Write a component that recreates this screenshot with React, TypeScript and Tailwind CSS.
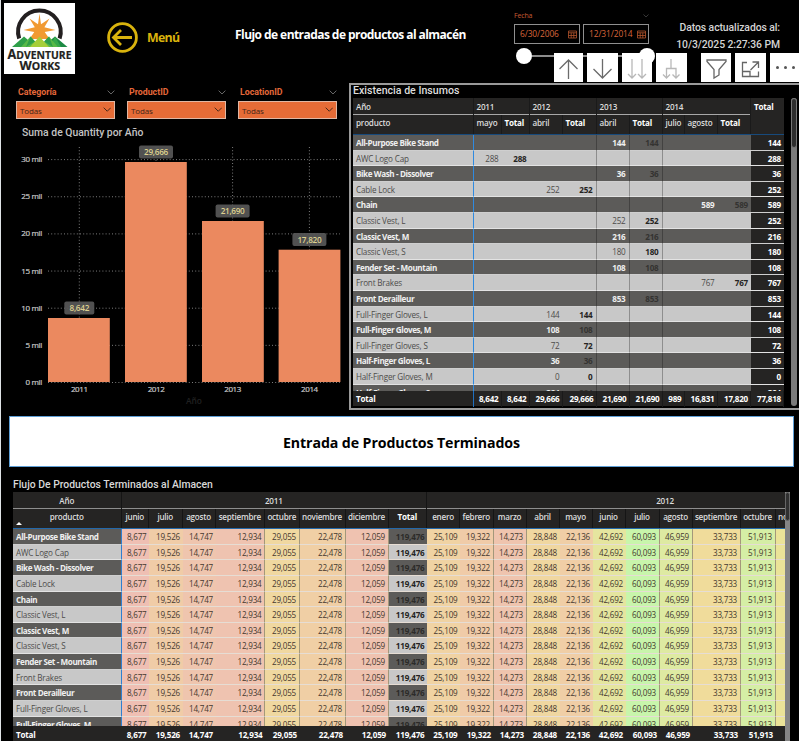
import React from "react";

const MENU = "font-['Open_Sans','Noto_Sans',sans-serif]";
const DIN = "font-[Roboto,'Open_Sans',sans-serif]";

function Logo() {
  return (
    <svg width="71" height="71" viewBox="0 0 71 71" className="mt-[3px] ml-[3px] shrink-0 bg-white">
      <path d="M15.2 35.5 A21.3 21.3 0 1 1 55.6 35.5" fill="none" stroke="#231f20" strokeWidth="4" />
      <path
        d="M35.5 10.5 L37 21.3 L45.5 15.5 L40.4 24.2 L51.5 27 L40.7 29 L45.5 36 H25.5 L30.3 29 L19.5 27 L30.8 24.2 L25.5 15.5 L34 21.3 Z"
        fill="#f19a32"
      />
      <path d="M8 44 L20 33.5 L32 44 Z" fill="#2e9f49" />
      <path d="M38 44 L51 33.5 L63.5 44 Z" fill="#1d8a45" />
      <path d="M46 44 L51 33.5 L57 44 Z" fill="#35a94b" />
      <path d="M17 44 L26.5 33.5 L36 44 Z" fill="#58b947" />
      <path d="M36 44 L45 33.5 L54 44 Z" fill="#58b947" />
      <path d="M26 44 L35.5 33.5 L45 44 Z" fill="#a6ce39" />
      <path d="M26.5 33.5 L31 38.5 L22 44 Z M45 33.5 L40 38.5 L49 44 Z" fill="#2f9e49" />
      <g fontFamily="'Open Sans'" fontWeight="700" fill="#231f20" stroke="#231f20" strokeWidth="0.2">
        <text x="3.5" y="56.4" fontSize="13.4" textLength="64" lengthAdjust="spacingAndGlyphs">
          A<tspan fontSize="11">DVENTURE</tspan>
        </text>
        <text x="15.5" y="67" fontSize="13" textLength="40.5" lengthAdjust="spacingAndGlyphs">
          W<tspan fontSize="10.8">ORKS</tspan>
        </text>
      </g>
    </svg>
  );
}

function Chevron({ color, w = 9 }: { color: string; w?: number }) {
  return (
    <svg width={w} height={w * 0.6} viewBox="0 0 10 6" fill="none" stroke={color} strokeWidth="1.1">
      <path d="M0.8 0.8 L5 5 L9.2 0.8" />
    </svg>
  );
}

function Calendar() {
  return (
    <svg width="9" height="9" viewBox="0 0 9 9" fill="none" stroke="#b4542c" strokeWidth="0.8">
      <path d="M0.5 1 H8.5 V8 H0.5 Z M0.5 2.8 H8.5 M0.5 5.5 H8.5 M3.2 2.8 V8 M5.8 2.8 V8" />
    </svg>
  );
}

function DateBox({ value }: { value: string }) {
  return (
    <div className="flex h-[20px] w-[66px] items-center justify-between border border-[#8f8f8f] pr-[2px] pl-[5px] text-[8.4px] tracking-[-0.1px] text-[#d9663a]">
      <span className="whitespace-nowrap">{value}</span>
      <Calendar />
    </div>
  );
}

const tools = [
  { w: 29, ml: "", color: "#6b6b6b", d: "M14.5 26 V7 M5.5 16 L14.5 7 L23.5 16" },
  { w: 31, ml: "ml-[4px]", color: "#6b6b6b", d: "M15.5 6 V25 M6.5 16 L15.5 25 L24.5 16" },
  { w: 30, ml: "ml-[4px]", color: "#b8b8b8", d: "M10 6 V25 M6 21 L10 25 L14 21 M20 6 V25 M16 21 L20 25 L24 21" },
  { w: 31, ml: "ml-[4px]", color: "#b8b8b8", d: "M15 6 V15.5 M10.5 25 V15.5 H20 V25 M7 21.5 L10.5 25 L14 21.5 M16.5 21.5 L20 25 L23.5 21.5" },
  { w: 30, ml: "ml-[14px]", color: "#666666", d: "M6 7 H25 V8.5 L18 16.5 V22 L13 25 V16.5 L6 8.5 Z" },
  { w: 31, ml: "ml-[4px]", color: "#666666", d: "M12 9.5 H7.5 V23.5 H23.5 V18.5 M7.5 18.5 H15 V23.5 M15.5 17 L23.5 9 M17.5 9 H23.5 V15" },
];

function Toolbar() {
  return (
    <div className="absolute top-[53px] left-[553px] flex">
      {tools.map((t, i) => (
        <div key={i} className={`h-[29px] bg-white ${t.ml}`}>
          <svg width={t.w} height="29" viewBox={`0 0 ${t.w} 29`} fill="none" stroke={t.color} strokeWidth="1.3">
            <path d={t.d} />
          </svg>
        </div>
      ))}
      <div className="ml-[4px] flex h-[29px] w-[29px] items-center justify-between bg-white pr-[4px] pl-[6px]">
        <i className="size-[3.4px] rounded-full bg-[#555]" />
        <i className="size-[3.4px] rounded-full bg-[#555]" />
        <i className="size-[3.4px] rounded-full bg-[#555]" />
      </div>
    </div>
  );
}

function Header() {
  return (
    <header className="relative flex h-[83px] shrink-0">
      <Logo />
      <div className="ml-[32px] flex h-[75px] items-center">
        <svg width="31" height="31" viewBox="0 0 31 31" fill="none" stroke="#d9b30d">
          <circle cx="15.5" cy="15.5" r="13.9" strokeWidth="2.8" />
          <path d="M25 15.5 H7 M14 8 L6.5 15.5 L14 23" strokeWidth="2.8" />
        </svg>
        <span className="mt-[2px] ml-[9px] w-[88px] text-[12.4px] font-bold tracking-[-0.7px] text-[#d9b30d]">Menú</span>
      </div>
      <h1 className="h-[70px] w-[279px] text-[12px] leading-[70px] font-bold tracking-[-0.56px] whitespace-nowrap text-white">
        Flujo de entradas de productos al almacén
      </h1>
      <div className="w-[135px] pt-[11px]">
        <div className="flex h-[10px] items-center justify-between text-[7px] tracking-[-0.15px] text-[#c85a32]">
          <span>Fecha</span>
          <Chevron color="#555" w={6} />
        </div>
        <div className="mt-[3px] flex justify-between">
          <DateBox value="6/30/2006" />
          <DateBox value="12/31/2014" />
        </div>
        <div className="mt-[4px] ml-[2px] flex items-center">
          <i className="size-[16px] rounded-full bg-white" />
          <i className="h-[2px] flex-1 bg-[#8c8c8c]" />
          <i className="-mr-[6px] size-[16px] rounded-full bg-white" />
        </div>
      </div>
      <div className={`${DIN} w-[131px] pt-[19px] text-right text-[10.4px] leading-[17px] font-medium tracking-[-0.08px] whitespace-nowrap text-[#d4d4d4]`}>
        <div>Datos actualizados al:</div>
        <div>10/3/2025 2:27:36 PM</div>
      </div>
      <Toolbar />
    </header>
  );
}

function Slicer({ label }: { label: string }) {
  return (
    <div className="w-[99px]">
      <div className="flex h-[12px] items-center justify-between">
        <span className={`${DIN} mt-[2px] pl-[2px] text-[8.8px] font-bold text-[#e5683a]`}>{label}</span>
        <Chevron color="#777" w={8} />
      </div>
      <div className="mt-[3px] flex h-[18px] items-center justify-between border border-[#e0b7a4] bg-[#e66c37] pr-[3px] pl-[3px]">
        <span className="mt-[2px] text-[8px] tracking-[-0.15px] text-[#3f2419]">Todas</span>
        <Chevron color="#3f2419" w={8.5} />
      </div>
    </div>
  );
}

const bars = [
  { year: "2011", label: "8,642", x: 48, top: 198, cx: 79.3 },
  { year: "2012", label: "29,666", x: 125, top: 42, cx: 156 },
  { year: "2013", label: "21,690", x: 202, top: 101, cx: 232.6 },
  { year: "2014", label: "17,820", x: 278.6, top: 129.7, cx: 309.4 },
];

function BarChart() {
  const ticks = [0, 5, 10, 15, 20, 25, 30];
  return (
    <svg width="348" height="289" viewBox="1 0 348 289" className="block" fontFamily="'Open Sans', sans-serif">
      <g stroke="#7d7d7d" strokeWidth="1" strokeDasharray="1 2.2">
        {ticks.map((t) => (
          <line key={t} x1="48" x2="340" y1={262.5 - t * 7.43} y2={262.5 - t * 7.43} />
        ))}
        {bars.map((b) => (
          <line key={b.year} x1={b.cx} x2={b.cx} y1="27" y2="262" />
        ))}
      </g>
      {ticks.map((t) => (
        <text key={t} x="41.8" y={265 - t * 7.43} fontSize="8" fill="#c8c8c8" textAnchor="end" letterSpacing="-0.35" stroke="#c8c8c8" strokeWidth="0.2">
          {t} mil
        </text>
      ))}
      {bars.map((b) => (
        <g key={b.year}>
          <rect x={b.x} y={b.top} width="61.8" height={262 - b.top} fill="#eb895f" />
          <rect x={b.cx - (b.label.length > 5 ? 17 : 15)} y={b.top - 16.6} width={b.label.length > 5 ? 34 : 30} height="13" rx="2" fill="#575757" fillOpacity="0.93" />
          <text x={b.cx} y={b.top - 7.2} fontSize="8.2" fontWeight="600" fill="#ddd08e" textAnchor="middle" letterSpacing="-0.3">
            {b.label}
          </text>
          <text x={b.cx} y="271.6" fontSize="8" fill="#c8c8c8" textAnchor="middle" letterSpacing="-0.4" stroke="#c8c8c8" strokeWidth="0.2">
            {b.year}
          </text>
        </g>
      ))}
      <text x="194" y="284" fontSize="8.4" fontWeight="600" fill="#202020" textAnchor="middle">
        Año
      </text>
    </svg>
  );
}

const COLS1 = "grid grid-cols-[120.5px_28px_28px_33px_34px_33px_33px_22px_33px_33.5px_33px]";

// [product, mayo, Total, abril, Total, abril, Total, julio, agosto, Total, Total]
const stock: string[][] = [
  ["All-Purpose Bike Stand", "", "", "", "", "144", "144", "", "", "", "144"],
  ["AWC Logo Cap", "288", "288", "", "", "", "", "", "", "", "288"],
  ["Bike Wash - Dissolver", "", "", "", "", "36", "36", "", "", "", "36"],
  ["Cable Lock", "", "", "252", "252", "", "", "", "", "", "252"],
  ["Chain", "", "", "", "", "", "", "", "589", "589", "589"],
  ["Classic Vest, L", "", "", "", "", "252", "252", "", "", "", "252"],
  ["Classic Vest, M", "", "", "", "", "216", "216", "", "", "", "216"],
  ["Classic Vest, S", "", "", "", "", "180", "180", "", "", "", "180"],
  ["Fender Set - Mountain", "", "", "", "", "108", "108", "", "", "", "108"],
  ["Front Brakes", "", "", "", "", "", "", "", "767", "767", "767"],
  ["Front Derailleur", "", "", "", "", "853", "853", "", "", "", "853"],
  ["Full-Finger Gloves, L", "", "", "144", "144", "", "", "", "", "", "144"],
  ["Full-Finger Gloves, M", "", "", "108", "108", "", "", "", "", "", "108"],
  ["Full-Finger Gloves, S", "", "", "72", "72", "", "", "", "", "", "72"],
  ["Half-Finger Gloves, L", "", "", "36", "36", "", "", "", "", "", "36"],
  ["Half-Finger Gloves, M", "", "", "0", "0", "", "", "", "", "", "0"],
  ["Half-Finger Gloves, S", "", "", "324", "324", "", "", "", "", "", "324"],
];
const stockTotals = ["8,642", "8,642", "29,666", "29,666", "21,690", "21,690", "989", "16,831", "17,820", "77,818"];
const ruled1 = [4, 5, 6];
const isTotal1 = [2, 4, 6, 9];

function StockTable() {
  return (
    <section className="relative h-[327px] flex-1 border-2 border-r-0 border-[#9a9a9a] pl-[2px]">
      <h2 className={`${DIN} h-[13px] text-[10.6px] leading-[11px] font-medium text-[#dcdcdc]`}>Existencia de Insumos</h2>
      <div className="flex justify-between">
        <div className="w-[431px] text-[8.1px] tracking-[-0.2px]">
          <div className="flex h-[36px] bg-[#252423] font-semibold text-[#dcdcdc]">
            <div className="w-[398px]">
              <div className="grid h-[17px] grid-cols-[120.5px_56px_67px_66px_88.5px] border-b border-[#a8a8a8] leading-[17px]">
                {["Año", "2011", "2012", "2013", "2014"].map((t) => (
                  <div key={t} className="border-r border-[#1a1a1a] pl-[3px]">{t}</div>
                ))}
              </div>
              <div className="grid h-[19px] grid-cols-[120.5px_28px_28px_33px_34px_33px_33px_22px_33px_33.5px] leading-[15px]">
                {["producto", "mayo", "Total", "abril", "Total", "abril", "Total", "julio", "agosto", "Total"].map((t, i) => (
                  <div key={i} className={`border-r border-[#1a1a1a] pl-[3px] ${t === "Total" ? "font-bold text-white" : ""}`}>{t}</div>
                ))}
              </div>
            </div>
            <div className="pl-[3px] leading-[17px] font-bold text-white">Total</div>
          </div>
          <div className="h-px bg-[#174a7c]" />
          <div className="h-[256px] overflow-hidden">
            {stock.map((r, n) => {
              const dark = n % 2 === 0;
              return (
                <div key={n} className={`${COLS1} h-[15.6px] leading-[16.6px] ${dark ? "bg-[#5c5b59] font-bold text-[#efefef]" : "bg-[#c8c8c8] text-[#4d4c4a]"}`}>
                  {r.map((v, i) => (
                    <div
                      key={i}
                      className={`h-[15.6px] border-b whitespace-nowrap ${dark ? "border-b-[#cfcfcf]" : "border-b-[#e3e3e3]"} ${
                        i === 0
                          ? `border-r border-r-[#2f8ae0] pl-[3px] ${dark ? "tracking-[-0.4px]" : "tracking-[-0.17px]"}`
                          : i === 10
                            ? "bg-[#252423] pr-[3px] text-right font-bold text-white"
                            : `pr-[3px] text-right ${ruled1.includes(i) ? (dark ? "border-r border-r-[#434241]" : "border-r border-r-[#8e8e8e]") : ""} ${
                                isTotal1.includes(i) ? (dark ? "text-[#343331]" : "font-bold text-[#252423]") : ""
                              }`
                      }`}
                    >
                      {v}
                    </div>
                  ))}
                </div>
              );
            })}
          </div>
          <div className={`${COLS1} h-[15px] bg-[#252423] leading-[16px] font-bold text-white`}>
            <div className="border-r border-[#1f6fc0] pl-[3px]">Total</div>
            {stockTotals.map((v, i) => (
              <div key={i} className="flex justify-end border-r border-[#1a1a1a] pr-[2px] tracking-[-0.25px]">{v}</div>
            ))}
          </div>
        </div>
        <div className="mr-[2px] h-[308px] w-[6px] rounded-full bg-[#7a7a7a]">
          <div className="h-[50px] rounded-full border border-[#777] bg-[#2e2e2e]" />
        </div>
      </div>
    </section>
  );
}

const COLS2 =
  "grid w-[806px] grid-cols-[108.5px_27.5px_33.5px_33px_49.5px_34.5px_46px_43px_38.5px_33px_33.5px_33px_33px_33px_33px_34px_33px_48px_35px_46px]";

const months: { name: string; value: string; tint: string; rule?: boolean }[] = [
  { name: "junio", value: "8,677", tint: "bg-[#efbfb3]" },
  { name: "julio", value: "19,526", tint: "bg-[#f0cca7]" },
  { name: "agosto", value: "14,747", tint: "bg-[#efc5ae]" },
  { name: "septiembre", value: "12,934", tint: "bg-[#efc3b0]", rule: true },
  { name: "octubre", value: "29,055", tint: "bg-[#f0d8a0]", rule: true },
  { name: "noviembre", value: "22,478", tint: "bg-[#f0cfa5]", rule: true },
  { name: "diciembre", value: "12,059", tint: "bg-[#efc2b0]", rule: true },
  { name: "Total", value: "119,476", tint: "" },
  { name: "enero", value: "25,109", tint: "bg-[#f0d3a3]" },
  { name: "febrero", value: "19,322", tint: "bg-[#f0cba8]", rule: true },
  { name: "marzo", value: "14,273", tint: "bg-[#efc4ae]", rule: true },
  { name: "abril", value: "28,848", tint: "bg-[#f0d7a0]" },
  { name: "mayo", value: "22,136", tint: "bg-[#f0cea6]" },
  { name: "junio", value: "42,692", tint: "bg-[#e5e59f]" },
  { name: "julio", value: "60,093", tint: "bg-[#c8f5ab]", rule: true },
  { name: "agosto", value: "46,959", tint: "bg-[#deeaa2]", rule: true },
  { name: "septiembre", value: "33,733", tint: "bg-[#f0dc9b]", rule: true },
  { name: "octubre", value: "51,913", tint: "bg-[#d5eea5]", rule: true },
  { name: "noviembre", value: "", tint: "bg-[#ebe398]" },
];

function FlowTable() {
  return (
    <section className="flex h-[249px] pl-[12px]">
      <div className="w-[772px] overflow-hidden text-[8.1px] tracking-[-0.2px]">
        <div className="grid h-[17px] w-[903px] grid-cols-[108.5px_305.5px_476px] border-b border-[#8e8e8e] bg-[#252423] text-center leading-[18px] font-semibold text-[#dcdcdc]">
          <div className="border-r border-[#151515]">Año</div>
          <div className="border-r border-[#151515]">2011</div>
          <div>2012</div>
        </div>
        <div className={`${COLS2} h-[19px] bg-[#252423] text-center leading-[15px] font-semibold text-[#dcdcdc]`}>
          <div className="relative border-r border-[#151515]">
            producto
            <i className="absolute bottom-[3px] left-[3px] border-x-[3px] border-b-[3px] border-x-transparent border-b-white" />
          </div>
          {months.map((m, i) => (
            <div key={i} className={`border-r border-[#151515] tracking-[-0.25px] whitespace-nowrap ${m.name === "Total" ? "font-bold text-white" : ""}`}>
              {m.name}
            </div>
          ))}
        </div>
        <div className="h-px bg-[#2268ab]" />
        <div className="h-[197px] overflow-hidden">
          {stock.slice(0, 13).map((r, n) => {
            const dark = n % 2 === 0;
            return (
              <div key={n} className={`${COLS2} h-[15.65px] leading-[16.6px]`}>
                <div
                  className={`h-[15.65px] border-r border-b border-r-[#2f7fd0] pl-[3px] whitespace-nowrap ${
                    dark ? "border-b-[#cfcfcf] bg-[#5c5b59] font-bold tracking-[-0.4px] text-[#efefef]" : "border-b-[#e3e3e3] bg-[#c8c8c8] tracking-[-0.17px] text-[#4d4c4a]"
                  }`}
                >
                  {r[0]}
                </div>
                {months.map((m, i) => (
                  <div
                    key={i}
                    className={`h-[15.65px] border-b border-b-[#e6ddd4] pr-[2.5px] text-right ${m.rule ? "border-r border-r-[#a3987a]" : ""} ${
                      m.name === "Total" ? (dark ? "bg-[#5c5b59] font-bold text-[#2c2b29]" : "bg-[#c8c8c8] font-bold text-[#252423]") : `${m.tint} text-[#45392f]`
                    }`}
                  >
                    {m.value}
                  </div>
                ))}
              </div>
            );
          })}
        </div>
        <div className={`${COLS2} h-[15px] bg-[#252423] leading-[17px] font-bold text-white`}>
          <div className="pl-[3px]">Total</div>
          {months.map((m, i) => (
            <div key={i} className="flex justify-end pr-[2.5px] tracking-[-0.2px]">{m.value}</div>
          ))}
        </div>
      </div>
      <div className="h-[249px] w-[5px] bg-[#858585]">
        <div className="h-[29px] rounded-full border border-[#666] bg-[#303030]" />
      </div>
    </section>
  );
}

export default function App() {
  return (
    <div className={`${MENU} flex h-[741px] w-[799px] flex-col overflow-hidden border-l border-[#dfe3e6] bg-black`}>
      <Header />
      <div className="flex h-[327px] shrink-0">
        <div className="w-[348px]">
          <div className="flex gap-[12px] pt-[3px] pl-[15px]">
            <Slicer label="Categoría" />
            <Slicer label="ProductID" />
            <Slicer label="LocationID" />
          </div>
          <div className="relative mt-px h-[289px]">
            <h2 className={`${DIN} absolute top-[6px] left-[21px] text-[10.4px] leading-[14px] font-medium text-[#c4c4c4]`}>Suma de Quantity por Año</h2>
            <BarChart />
          </div>
        </div>
        <StockTable />
      </div>
      <div className="mt-[6px] ml-[8px] flex h-[51px] w-[785px] shrink-0 items-center justify-center border border-[#5f9fd6] bg-white pt-[2px] text-[14.2px] font-bold tracking-[-0.1px] text-black">
        Entrada de Productos Terminados
      </div>
      <h2 className={`${DIN} mt-[10px] ml-[12px] h-[15px] shrink-0 text-[10.4px] leading-[15px] font-medium text-[#d8d8d8]`}>Flujo De Productos Terminados al Almacen</h2>
      <FlowTable />
    </div>
  );
}
